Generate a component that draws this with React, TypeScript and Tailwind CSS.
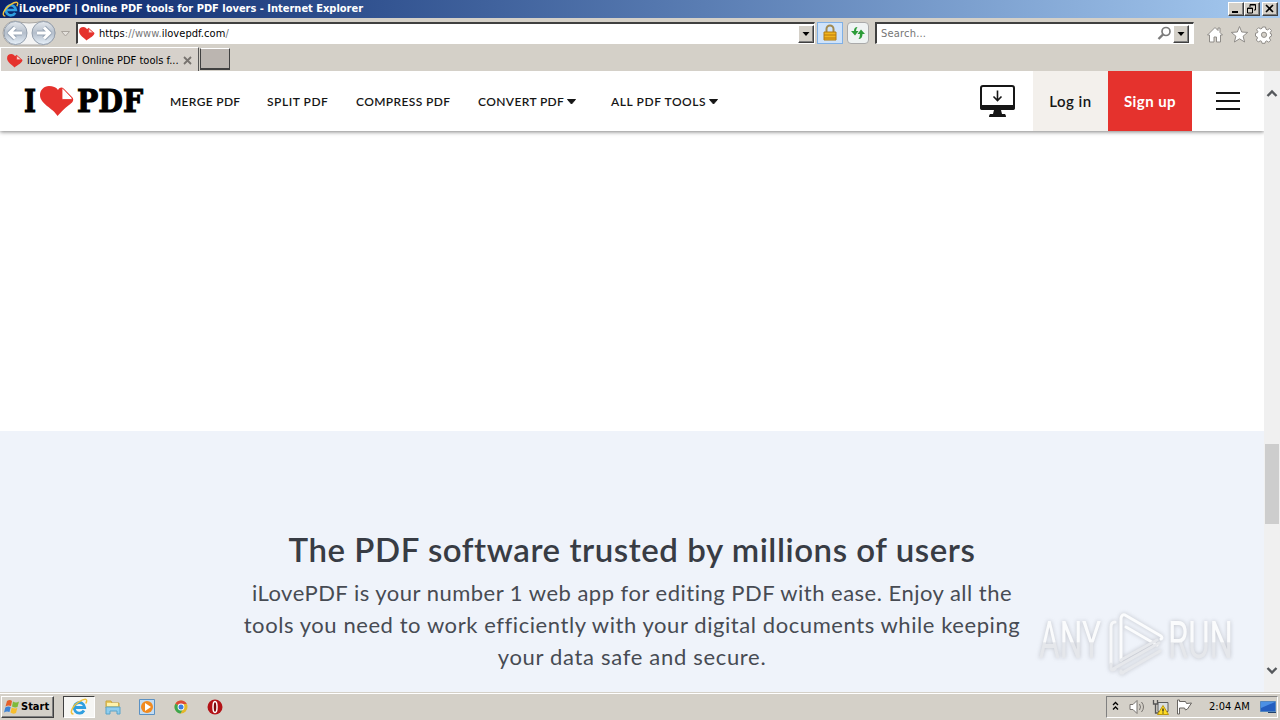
import type { ReactNode } from 'react'

const bevel = 'border border-t-white border-l-white border-r-[#404040] border-b-[#404040] bg-[#d4d0c8] shadow-[inset_-1px_-1px_0_#808080]'
const field = 'border border-t-[#404040] border-l-[#404040] border-r-white border-b-white bg-white'

function Heart({ className }: { className?: string }) {
  return (
    <svg viewBox="0 0 34 30" className={className}>
      <path d="M16 29C11 23 0 18 0 9 0 3 4 0 9 0c4 0 7 2 8 5l3-3 13 11c0 6-11 11-17 16z" fill="#e5322d" />
      <path d="M20.500 3v9.500H31z" fill="#fbd9d6" stroke="#e5322d" strokeWidth="1.500" />
    </svg>
  )
}

function IeLogo({ className }: { className?: string }) {
  return (
    <svg viewBox="0 0 18 18" className={className} fill="none">
      <path d="M14 12.500a5.300 5.300 0 1 1 .7-3H5" stroke="#2f9fe0" strokeWidth="2.800" />
      <path d="M3.500 16C-1 16 2 8 9 3.800S18 1 15.800 5.500" stroke="#f0c23c" strokeWidth="1.500" />
    </svg>
  )
}

function Watermark() {
  return (
    <svg
      width="224"
      height="76"
      viewBox="0 0 224 76"
      className="absolute left-[1030px] top-[533px] overflow-visible drop-shadow-[0_0_2px_rgba(100,100,110,0.35)]"
    >
      <defs>
        <linearGradient id="wm" x1="0" y1="0" x2="0" y2="1">
          <stop offset="0.52" stopColor="#fafbfc" />
          <stop offset="0.54" stopColor="#e5e7eb" />
        </linearGradient>
      </defs>
      <g fill="url(#wm)" fontFamily="Roboto, sans-serif" fontSize="51" fontWeight="400">
        <text x="9" y="54" textLength="62" lengthAdjust="spacingAndGlyphs">ANY</text>
        <text x="138" y="54" textLength="65" lengthAdjust="spacingAndGlyphs">RUN</text>
      </g>
      <g fill="none" stroke="#e6e8ec" strokeLinecap="round" strokeLinejoin="round" strokeWidth="3">
        <path d="M81 59V23q0-5 4-5" stroke="#f7f8fa" />
        <path d="M81 60v5q1 2 4 0" />
        <path d="M91 56V14q1-4 4-3l36 21q2 2 0 3" stroke="#fbfcfd" />
        <path d="M96 23l31 18" stroke="#fbfcfd" />
        <path d="M83 65l46-26M92 69l38-22M93 69q-3 1-2-2M91 56l36-20" />
      </g>
    </svg>
  )
}

function TitleBar() {
  return (
    <div className="flex h-[18px] items-center bg-linear-to-r from-[#0a246a] to-[#a6caf0] pl-[2px] pr-[2px]">
      <IeLogo className="size-[17px]" />
      <span className="flex-1 whitespace-nowrap pt-px font-['DejaVu_Sans_Condensed','DejaVu_Sans',sans-serif] text-[11px] font-bold font-stretch-condensed tracking-[-0.010px] text-white">
        iLovePDF | Online PDF tools for PDF lovers - Internet Explorer
      </span>
      <div className="flex">
        <span className={`${bevel} flex h-[14px] w-4`}>
          <svg viewBox="0 0 14 12" className="h-3 w-[14px]"><path d="M3 8h6v2H3z" /></svg>
        </span>
        <span className={`${bevel} flex h-[14px] w-4`}>
          <svg viewBox="0 0 14 12" className="h-3 w-[14px]" fill="none" stroke="#000">
            <path d="M5 4V1.500h5.500V7H9M5 2h5.500M2.500 5h5v5h-5zM2 5.500h6" />
          </svg>
        </span>
        <span className={`${bevel} ml-[2px] flex h-[14px] w-4`}>
          <svg viewBox="0 0 14 12" className="h-3 w-[14px]" fill="none" stroke="#000" strokeWidth="1.600">
            <path d="M3 2l7 7M10 2L3 9" />
          </svg>
        </span>
      </div>
    </div>
  )
}

function NavArrows() {
  return (
    <svg width="74" height="29" viewBox="0 0 74 29" className="shrink-0">
      <defs>
        <linearGradient id="orb" x1="0" y1="0" x2="0" y2="1">
          <stop offset="0" stopColor="#e5e9ee" />
          <stop offset="0.5" stopColor="#b4becb" />
          <stop offset="1" stopColor="#e8f1fa" />
        </linearGradient>
      </defs>
      <path d="M15 3Q29 7 43 3A12 12 0 0 1 43 27H15A12 12 0 0 1 15 3z" fill="#f4f4f4" stroke="#aaa7a3" />
      <circle cx="15.500" cy="15" r="11.500" fill="url(#orb)" stroke="#95a0ae" />
      <circle cx="43.500" cy="15" r="11.500" fill="url(#orb)" stroke="#95a0ae" />
      <g fill="none" stroke="#98a5b5" strokeWidth="5" strokeLinejoin="round">
        <path d="M22 15H10M15 9.500L9.500 15l5.500 5.500M37 15h12M44 9.500l5.500 5.500-5.500 5.500" />
      </g>
      <g fill="none" stroke="#fff" strokeWidth="3">
        <path d="M22 15H10M15 9.500L9.500 15l5.500 5.500M37 15h12M44 9.500l5.500 5.500-5.500 5.500" />
      </g>
      <path d="M61.500 13.500h8l-4 4.500z" fill="#e4e1dc" stroke="#aaa59e" />
    </svg>
  )
}

function DropButton({ className }: { className: string }) {
  return (
    <span className={`${bevel} flex shrink-0 items-center justify-center ${className}`}>
      <svg width="8" height="4" viewBox="0 0 8 4"><path d="M.500 0h7L4 4z" /></svg>
    </span>
  )
}

function AddressBar() {
  return (
    <div className="flex h-[29px] items-start bg-[#d4d0c8] font-['DejaVu_Sans_Condensed','DejaVu_Sans',sans-serif] text-[11px] font-stretch-condensed">
      <NavArrows />
      <div className={`${field} ml-[2px] mt-1 flex h-[22px] w-[739px] items-center border-l-2 border-t-2`}>
        <Heart className="ml-px h-[14px] w-4" />
        <span className="ml-1 flex-1 pt-[2px] tracking-[0.060px] text-[#777]">
          <span className="text-black">https</span>://www.<span className="text-black">ilovepdf.com</span>/
        </span>
        <DropButton className="h-[18px] w-4" />
      </div>
      <span className="ml-[2px] mt-1 flex h-[22px] w-[26px] items-center justify-center border border-[#7fb0e6] bg-[#cfe3fa]">
        <svg width="14" height="18" viewBox="0 0 14 18">
          <path d="M3.500 9V5a3.500 3.500 0 0 1 7 0v4" fill="none" stroke="#a18a50" strokeWidth="2" />
          <path d="M1 8h12v8H1z" fill="#f1b51d" stroke="#b27a10" />
          <path d="M1 11h12M1 14h12" stroke="#b9780e" />
        </svg>
      </span>
      <span className="ml-[4px] mt-1 flex h-[22px] w-[22px] items-center justify-center rounded-sm border border-[#aaa] bg-[#eff3f3]">
        <svg width="16" height="16" viewBox="0 0 16 16" fill="#2b9c38">
          <path d="M7.500 2Q4 2 4 6H1l4 4.500L8.500 6H6q0-2 1.500-4zM8.500 14q4 0 4-5H15l-4-4.500L7.500 9H10q0 3-1.500 5z" />
        </svg>
      </span>
      <div className={`${field} ml-[6px] mt-1 flex h-[22px] w-[319px] items-center border-l-2 border-t-2 pr-[4px]`}>
        <span className="ml-[4px] flex-1 pt-[2px] tracking-[0.200px] text-[#757575]">Search...</span>
        <svg width="15" height="15" viewBox="0 0 15 15" fill="none" stroke="#7b7b7b" className="mr-px">
          <circle cx="9" cy="5.500" r="4" strokeWidth="1.700" />
          <path d="M6 8.500L1.500 13" strokeWidth="2.400" />
        </svg>
        <DropButton className="h-[18px] w-4" />
      </div>
      <svg width="66" height="20" viewBox="0 0 66 20" className="ml-[12px] mt-[7px]" fill="#fff" stroke="#8f8c88">
        <path d="M1.500 10L9 2.500l3 3V3h2v4.500l2.500 2.500h-2v7h-4v-5H8v5H3.500v-7z" />
        <path d="M33.500 1.500l2.200 5.500 6 .400-4.600 3.800 1.500 5.800-5.100-3.200-5.100 3.200 1.500-5.800L25.300 7.400l6-.400z" />
        <path d="M56.500 2h3l.500 2.300 1.500.600 2-1.300 2 2-1.300 2 .400 1.400h1v2l-1.600.700-.600 1.500 1.300 2-2 2-2-1.300-1.200.600-.500 1.800h-3l-.500-2-1.200-.500-2 1.200-2-2 1.200-2-.600-1.300-1.400-.500v-3l2-.500.400-1-1.300-2 2-2 2 1.200 1.400-.600zM58 7.200a2.600 2.600 0 1 0 0 5.200 2.600 2.600 0 0 0 0-5.200z" fillRule="evenodd" />
      </svg>
    </div>
  )
}

function TabRow() {
  return (
    <div className="flex h-6 items-start bg-[#d4d0c8]">
      <div className="flex h-6 w-[199px] items-center border-l border-t border-white border-r border-r-[#555] bg-[#d6d1cb] pl-[6px] pt-[2px]">
        <Heart className="h-[14px] w-4" />
        <span className="ml-1 w-[153px] whitespace-nowrap pt-px font-['DejaVu_Sans_Condensed','DejaVu_Sans',sans-serif] text-[11px] font-stretch-condensed">
          iLovePDF | Online PDF tools f...
        </span>
        <svg width="9" height="9" viewBox="0 0 9 9" className="ml-[3px] shrink-0" stroke="#77736f" strokeWidth="1.800"><path d="M1 1l7 7M8 1L1 8" /></svg>
      </div>
      <div className="ml-px mt-px h-[22px] w-[30px] border border-t-white border-l-[#404040] border-r-[#404040] border-b-2 border-b-[#404040] bg-[#bbb5b0]" />
    </div>
  )
}

function MenuItem({ children, className, caret }: { children: ReactNode; className: string; caret?: boolean }) {
  return (
    <span className={`flex shrink-0 items-center whitespace-nowrap pt-[2px] text-[12px] font-semibold text-[#161616] ${className}`}>
      <span className="flex-1">{children}</span>
      {caret && <svg width="9" height="6" viewBox="0 0 9 6" className="mr-[3px]"><path d="M.500.500h8L4.500 5z" fill="#161616" stroke="#161616" strokeLinejoin="round" /></svg>}
    </span>
  )
}

function SiteHeader() {
  return (
    <header className="relative flex h-[60px] items-center bg-white font-[Lato,sans-serif] shadow-[0_1px_4px_rgba(0,0,0,0.5)]">
      <svg width="128" height="44" viewBox="0 0 128 44" className="ml-[23px] overflow-visible">
        <g fontFamily="'DejaVu Serif', serif" fontWeight="bold" fontSize="31" stroke="#000" strokeWidth="1.100">
          <text x="1" y="33" textLength="12" lengthAdjust="spacingAndGlyphs">I</text>
          <text x="54" y="33" textLength="66" lengthAdjust="spacingAndGlyphs">PDF</text>
        </g>
        <svg x="17" y="7" width="34" height="30" viewBox="0 0 34 30" overflow="visible">
          <path d="M17.500 30C13 22 0 18 0 9 0 4 4 0 9 0c4 0 7 1 9 4 2-3 4-3 6-1l8 8c3 3 0 6-3 8-5 4-8 7-11.500 11z" fill="#e5322d" />
          <path d="M22 3.500v9q0 1 1 1h8.500q1-1 0-2l-8-8.500q-1-1-1.500.500z" fill="#fff" stroke="#e5322d" strokeWidth=".8" />
        </svg>
      </svg>
      <MenuItem className="ml-[19px] w-[97px] tracking-[0.320px]">MERGE PDF</MenuItem>
      <MenuItem className="w-[89px] tracking-[0.540px]">SPLIT PDF</MenuItem>
      <MenuItem className="w-[122px] tracking-[0.380px]">COMPRESS PDF</MenuItem>
      <MenuItem className="w-[101px] tracking-[0.370px]" caret>CONVERT PDF</MenuItem>
      <MenuItem className="ml-[32px] w-[110px] tracking-[0.580px]" caret>ALL PDF TOOLS</MenuItem>
      <svg width="36" height="34" viewBox="0 0 36 34" className="ml-auto mr-[18px]">
        <rect x="2" y="2" width="33" height="23" rx="2" fill="none" stroke="#161616" strokeWidth="2" />
        <path d="M1 21h35v3q0 2-2 2H3q-2 0-2-2zM15 26h7l1 4h3q1 1 1 3H10q0-2 1-3h3z" fill="#161616" />
        <path d="M18.500 6.500v10M14.500 12.500l4 4 4-4" fill="none" stroke="#161616" strokeWidth="1.600" />
      </svg>
      <a className="flex h-full w-[75px] items-center justify-center bg-[#f3f0ec] pt-px text-[15px] font-semibold tracking-[0.480px] text-[#161616]">Log in</a>
      <a className="flex h-full w-[84px] items-center justify-center bg-[#e5322d] pt-px text-[15px] font-bold tracking-[0.450px] text-white">Sign up</a>
      <div className="ml-6 mr-6 flex w-6 flex-col gap-[6px]">
        <i className="h-[2px] bg-[#161616]" />
        <i className="h-[2px] bg-[#161616]" />
        <i className="h-[2px] bg-[#161616]" />
      </div>
    </header>
  )
}

function ScrollBar() {
  return (
    <div className="flex w-4 flex-col items-center bg-[#f0f0f0]">
      <svg width="12" height="9" viewBox="0 0 12 9" className="mt-[18px]" fill="none" stroke="#55585c" strokeWidth="2.400"><path d="M1.500 7L6 2.500 10.500 7" /></svg>
      <div className="mt-[346px] h-20 w-[14px] bg-[#cdcdcd]" />
      <svg width="12" height="9" viewBox="0 0 12 9" className="mt-[142px]" fill="none" stroke="#55585c" strokeWidth="2.400"><path d="M1.500 2L6 6.500 10.500 2" /></svg>
    </div>
  )
}

function Taskbar() {
  return (
    <div className="flex h-[27px] items-center border-t border-white bg-[#d4d0c8] pl-px pr-[2px]">
      <button className={`${bevel} flex h-[22px] w-[53px] items-center pl-[2px] font-['DejaVu_Sans_Condensed','DejaVu_Sans',sans-serif] text-[11px] font-bold font-stretch-condensed`}>
        <svg width="16" height="16" viewBox="0 0 16 16" className="mr-px shrink-0">
          <path d="M3 2q3-2 5 0L7 7Q4 6 1.500 7.500z" fill="#e5602a" />
          <path d="M9 2.500q3 2 6 0L13.500 8Q11 9 8 7.500z" fill="#7fba3c" />
          <path d="M1.300 8.500Q4 7 6.700 8L5.500 13q-3-1-5.500.500z" fill="#3d83d5" />
          <path d="M7.800 8.500q3 1.500 5.500.500L12 14q-3 1.500-5.500-.500z" fill="#f7be2d" />
        </svg>
        <span className="pt-px">Start</span>
      </button>
      <span className="ml-[9px] flex h-[22px] w-8 items-center justify-center border-l border-t border-[#404040] border-b border-r border-b-white border-r-white bg-[#f6f6f4]">
        <IeLogo className="size-[18px]" />
      </span>
      <svg width="18" height="18" viewBox="0 0 18 18" className="ml-[9px]">
        <path d="M2 3h5l1 2h7v5H2z" fill="#e9c95c" stroke="#c9a43c" />
        <path d="M3 5h11v3H3z" fill="#fff2ab" />
        <path d="M2 9h14v7h-3v-3H6v3H2z" fill="#8fcdee" stroke="#58a3c9" />
      </svg>
      <svg width="18" height="18" viewBox="0 0 18 18" className="ml-4">
        <path d="M1.500 1.500h15v15h-15z" fill="#c3dcf3" stroke="#5b91c3" />
        <circle cx="9" cy="9" r="6" fill="#f18a20" />
        <path d="M7 5l6 4-6 4z" fill="#fff" />
      </svg>
      <svg width="16" height="16" viewBox="0 0 16 16" className="ml-[17px]">
        <circle cx="8" cy="8" r="6.500" fill="#e4b72b" />
        <path d="M8 8L2.400 4.700A6.500 6.500 0 0 1 13.800 5H8z" fill="#db4a38" />
        <path d="M8 8L2.400 4.700A6.500 6.500 0 0 0 7.500 14.500L10.500 9z" fill="#3da650" />
        <circle cx="8" cy="8" r="3.400" fill="#fff" />
        <circle cx="8" cy="8" r="2.500" fill="#3a7de0" />
      </svg>
      <svg width="16" height="16" viewBox="0 0 16 16" className="ml-[18px]">
        <circle cx="8" cy="8" r="7.500" fill="#b31217" />
        <ellipse cx="8" cy="8" rx="2" ry="5.500" fill="#7c090c" stroke="#fff" strokeWidth="1.500" />
      </svg>
      <div className="ml-auto flex h-[22px] w-[172px] items-center border border-b-white border-l-[#808080] border-r-white border-t-[#808080]">
        <svg width="7" height="10" viewBox="0 0 7 10" className="ml-[5px] mb-[3px]" fill="none" stroke="#000" strokeWidth="1.300"><path d="M1 4l2.500-2.500L6 4M1 8.500L3.500 6 6 8.500" /></svg>
        <svg width="17" height="16" viewBox="0 0 17 16" className="ml-[10px]" fill="#fff" stroke="#77736f">
          <path d="M1 5.500h3L8 1.500v13l-4-4H1z" />
          <path d="M10.500 5q2 3 0 6M12.500 3q4 5 0 10" fill="none" />
        </svg>
        <svg width="18" height="17" viewBox="0 0 18 17" className="ml-[6px]">
          <path d="M6 3.500h10v9H6z" fill="#d9dee0" stroke="#5c5c5c" />
          <path d="M1.500 1v4h4V1M3.500 5v9h5" fill="none" stroke="#555" strokeWidth="1.300" />
          <path d="M11 6.500l5.500 9h-11z" fill="#ffdc24" stroke="#bd970c" />
          <path d="M11 9.500v3M11 13.500v1" stroke="#222" strokeWidth="1.300" />
        </svg>
        <svg width="17" height="16" viewBox="0 0 17 16" className="ml-[6px]" fill="#fff" stroke="#686561">
          <path d="M1.500 1v14h2V9h5l1 2 2-1 4-6-5 .5-1-2h-6V1z" />
        </svg>
        <span className="ml-[16px] whitespace-nowrap pt-px font-['DejaVu_Sans_Condensed','DejaVu_Sans',sans-serif] text-[11px] font-stretch-condensed">2:04 AM</span>
        <svg width="16" height="14" viewBox="0 0 16 14" className="ml-auto mr-[1px]">
          <path d="M.500 1.500h15v10H.500z" fill="#245ec0" stroke="#5386be" />
          <path d="M1 2h14L1 8z" fill="#4c90e4" />
          <path d="M8 12h8v1H8z" fill="#20426d" />
        </svg>
      </div>
    </div>
  )
}

export default function App() {
  return (
    <div className="flex h-[720px] w-[1280px] flex-col overflow-hidden bg-[#d4d0c8] text-black">
      <TitleBar />
      <AddressBar />
      <TabRow />
      <div className="relative flex h-[621px]">
        <main className="w-[1264px] overflow-hidden bg-white">
          <SiteHeader />
          <div className="h-[300px]" />
          <section className="h-[261px] bg-[#eff3fa] pt-[94px] text-center font-[Lato,sans-serif] text-[#383c44]">
            <h2 className="text-[33px] font-semibold leading-[48px] tracking-[0.550px]">The PDF software trusted by millions of users</h2>
            <div className="mt-[4px] whitespace-nowrap text-[22px] leading-8 text-[#474b53]">
              <p className="tracking-[0.490px]">iLovePDF is your number 1 web app for editing PDF with ease. Enjoy all the</p>
              <p className="tracking-[0.570px]">tools you need to work efficiently with your digital documents while keeping</p>
              <p className="tracking-[0.680px]">your data safe and secure.</p>
            </div>
          </section>
        </main>
        <ScrollBar />
        <Watermark />
      </div>
      <div className="h-px bg-[#d4d0c8]" />
      <Taskbar />
    </div>
  )
}
